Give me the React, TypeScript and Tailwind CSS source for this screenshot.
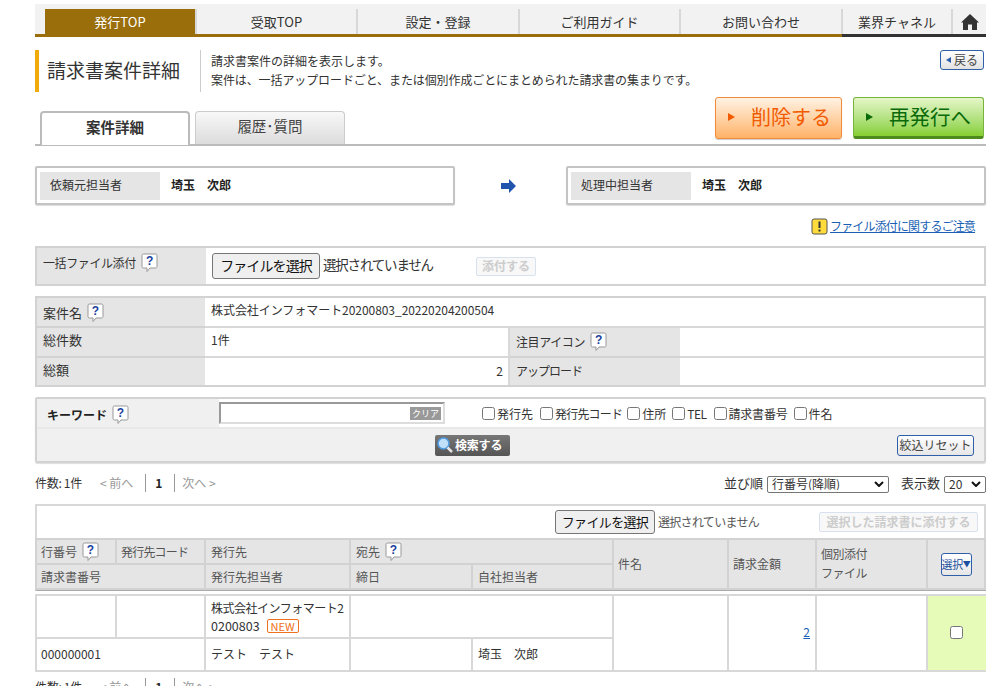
import React from "react";

function Help() {
  return (
    <svg width="17" height="20" viewBox="0 0 17 20" className="inline-block shrink-0">
      <path d="M2.5 1 H14.5 Q16 1 16 2.5 V13.5 Q16 15 14.5 15 H9 L6 18.5 V15 H2.5 Q1 15 1 13.5 V2.5 Q1 1 2.5 1 Z" fill="#fff" stroke="#999" strokeWidth="1" />
      <text x="8.5" y="12" textAnchor="middle" fontSize="12" fontWeight="700" fill="#1a3f9e" fontFamily="Liberation Sans, sans-serif">?</text>
    </svg>
  );
}

function Tri({ color }: { color: string }) {
  return (
    <svg width="7" height="10" viewBox="0 0 7 10" className="shrink-0">
      <path d="M0 1 L7 5 L0 9 Z" fill={color} />
    </svg>
  );
}

function Chevron() {
  return (
    <svg width="10" height="6" viewBox="0 0 10 6" className="absolute right-[5px] top-[5px] pointer-events-none">
      <path d="M1 1 L5 5 L9 1" fill="none" stroke="#111" strokeWidth="2" />
    </svg>
  );
}

function Person({ label, name, w }: { label: string; name: string; w: string }) {
  return (
    <div className={"h-[39px] flex items-center border-2 border-[#c4c4c4] rounded-[2px] p-[3px] bg-white shadow-[0_1px_1px_#ddd] " + w}>
      <div className="w-[120px] h-[28px] bg-[#e5e5e5] flex items-center pl-[10px] pb-[1px] text-[12px] text-[#333]">{label}</div>
      <div className="ml-[11px] pb-[1px] text-[12px] font-bold text-[#222]">{name}</div>
    </div>
  );
}

function NavItem({ children, active, w }: { children: React.ReactNode; active?: boolean; w: string }) {
  return (
    <div className={"h-[25px] flex items-center justify-center border-r-2 border-[#d8d8d8] text-[13px] " + w + " " + (active ? "bg-[#9a6e0a] text-white" : "text-[#333]")}>{children}</div>
  );
}

const thCell = "bg-[#e5e5e5] border-r-2 border-b-2 border-[#d2d2d2] text-[12px] text-[#555] flex items-center";
const tdBase = "bg-white border-r-2 border-b-2 border-[#d8d8d8] text-[12px] text-[#333]";
const tdCell = tdBase + " flex items-center pb-[1px]";

function Pager() {
  return (
    <div className="flex items-center text-[12px]">
      <span className="text-[#333] tracking-[-0.3px]">件数: 1件</span>
      <span className="ml-[18px] text-[#999]">&lt; 前へ</span>
      <span className="ml-[12px] w-px h-[18px] bg-[#999]" />
      <span className="ml-[9px] font-bold text-[#222]">1</span>
      <span className="ml-[12px] w-px h-[18px] bg-[#999]" />
      <span className="ml-[7px] text-[#999]">次へ &gt;</span>
    </div>
  );
}

const checks: { t: string; c: string }[] = [
  { t: "発行先", c: "mr-[7px]" },
  { t: "発行先コード", c: "mr-[5px] tracking-[-0.8px]" },
  { t: "住所", c: "mr-[6px]" },
  { t: "TEL", c: "mr-[7px] tracking-[-0.5px]" },
  { t: "請求書番号", c: "mr-[6px] tracking-[-0.2px]" },
  { t: "件名", c: "" },
];

const cols = "grid-cols-[80px_89px_145px_122px_141px_115px_88px_111px_58px]";

export default function App() {
  return (
    <div className="h-[686px] w-[1000px] overflow-hidden bg-white text-[#333] text-[12px]" style={{ fontFamily: '"Noto Sans CJK JP", "Liberation Sans", sans-serif' }}>
      <div className="ml-[35px] w-[951px] pt-[4px]">
        {/* nav */}
        <div className="h-[33px] bg-[#f2f2f2] pt-[5px] flex flex-col justify-between">
          <div className="flex pl-[10px]">
            <NavItem active w="w-[152px]">発行TOP</NavItem>
            <NavItem w="w-[161px]">受取TOP</NavItem>
            <NavItem w="w-[162px]">設定・登録</NavItem>
            <NavItem w="w-[161px]">ご利用ガイド</NavItem>
            <NavItem w="w-[162px]">お問い合わせ</NavItem>
            <NavItem w="w-[110px]">業界チャネル</NavItem>
            <div className="flex-1 h-[25px] flex items-center justify-center pt-[1px]">
              <svg width="18" height="18" viewBox="0 0 18 18">
                <path d="M9 1 L18 9.5 L16 9.5 V17 H11 V11.5 H7 V17 H2 V9.5 H0 Z" fill="#333" />
              </svg>
            </div>
          </div>
          <div className="flex h-[3px]">
            <div className="w-[807px] bg-[#9a6e0a]" />
            <div className="flex-1 bg-[#333]" />
          </div>
        </div>

        {/* title */}
        <div className="mt-[13px] h-[42px] flex">
          <div className="w-[4px] bg-[#f0ab0a]" />
          <div className="w-[161px] flex items-center pl-[8px] pb-[1px] text-[19px] text-[#333]">請求書案件詳細</div>
          <div className="w-px bg-[#ccc]" />
          <div className="pl-[10px] text-[12px] leading-[19px] text-[#333] pt-[1px]">
            <div>請求書案件の詳細を表示します。</div>
            <div className="tracking-[-0.1px]">案件は、一括アップロードごと、または個別作成ごとにまとめられた請求書の集まりです。</div>
          </div>
          <div className="ml-auto mr-[2px] w-[44px] h-[20px] border border-[#2f5fa8] rounded-[3px] bg-gradient-to-b from-white to-[#e2e2e2] flex items-center justify-center gap-[3px] text-[12px] text-[#444]">
            <svg width="5" height="6" viewBox="0 0 5 6"><path d="M5 0 V6 L0 3 Z" fill="#2f5fa8" /></svg>
            戻る
          </div>
        </div>

        {/* tabs + buttons */}
        <div className="mt-[5px] h-[49px] flex border-b-2 border-[#bbb]">
          <div className="self-end flex ml-[5px] gap-[5px] mb-[-2px]">
            <div className="w-[150px] h-[34px] border-2 border-b-0 border-[#bbb] rounded-t-[4px] bg-white flex items-center justify-center pb-[4px] text-[14.5px] font-bold text-[#333]">案件詳細</div>
            <div className="w-[150px] h-[33px] mb-[2px] border border-b-0 border-[#ccc] rounded-t-[4px] bg-gradient-to-b from-[#f8f8f8] to-[#dcdcdc] flex items-center justify-center pb-[4px] text-[14.5px] text-[#444]">履歴･質問</div>
          </div>
          <div className="ml-auto mr-[2px] flex gap-[11px] h-[42px]">
            <div className="w-[127px] h-[42px] border border-[#f08c3c] rounded-[3px] bg-gradient-to-b from-[#fff2e2] to-[#ffb266] shadow-[0_1px_1px_#ccc] flex items-center pl-[12px] pb-[2px] gap-[16px] text-[20px] text-[#f25a00]">
              <Tri color="#f25a00" />
              削除する
            </div>
            <div className="w-[131px] h-[42px] border border-[#78b43c] border-b-[3px] border-b-[#4f8a1c] rounded-[3px] bg-gradient-to-b from-[#e6f6c8] to-[#86cf2e] flex items-center pl-[12px] pb-[1px] gap-[16px] text-[20.5px] text-[#0a6a0a]">
              <Tri color="#0a6a0a" />
              再発行へ
            </div>
          </div>
        </div>

        {/* persons */}
        <div className="mt-[20px] flex items-center justify-between">
          <Person w="w-[420px]" label="依頼元担当者" name="埼玉　次郎" />
          <svg width="15" height="14" viewBox="0 0 15 14" className="shrink-0 ml-[46px] mr-[50px]">
            <path d="M0 4 H8 V0 L15 7 L8 14 V10 H0 Z" fill="#1f55ad" />
          </svg>
          <Person w="w-[420px]" label="処理中担当者" name="埼玉　次郎" />
        </div>

        {/* notice */}
        <div className="mt-[12px] h-[18px] flex items-center justify-end pr-[11px]">
          <svg width="17" height="17" viewBox="0 0 17 17" className="mr-[2px]">
            <rect x="1" y="1" width="15" height="15" rx="2" fill="#ffdc3c" stroke="#555" />
            <rect x="7.5" y="3.5" width="2" height="6.5" fill="#333" />
            <rect x="7.5" y="11.5" width="2" height="2" fill="#333" />
          </svg>
          <a className="text-[12px] tracking-[-0.85px] text-[#1a5fb4] underline">ファイル添付に関するご注意</a>
        </div>

        {/* bulk attach */}
        <div className="mt-[11px] h-[40px] border-2 border-[#d2d2d2] flex">
          <div className="w-[169px] bg-[#e5e5e5] pl-[6px] pt-[5px] flex items-start gap-[5px] text-[12px] tracking-[-0.4px] text-[#333] leading-[20px]">
            一括ファイル添付 <Help />
          </div>
          <div className="flex-1 flex items-center pl-[6px]">
            <button className="h-[26px] w-[108px] pb-[2px] border border-[#767676] rounded-[3px] bg-[#efefef] text-[14px] tracking-[-0.9px] text-[#111] leading-none">ファイルを選択</button>
            <span className="ml-[3px] pb-[3px] text-[13.5px] tracking-[-1.2px] text-[#333]">選択されていません</span>
            <div className="ml-[43px] h-[19px] w-[60px] border border-[#d8e2ee] rounded-[2px] bg-[#f8f8f8] flex items-center justify-center text-[12px] text-[#ccc] font-bold">添付する</div>
          </div>
        </div>

        {/* info */}
        <div className="mt-[10px] border-2 border-[#d2d2d2] grid grid-cols-[168px_305px_170px_1fr] grid-rows-[30px_30px_27px] h-[91px]">
          <div className="bg-[#e5e5e5] border-b-2 border-[#d2d2d2] pl-[6px] pt-[1px] flex items-center gap-[5px] text-[13px]">案件名 <Help /></div>
          <div className="col-span-3 border-b-2 border-[#d8d8d8] pl-[6px] flex items-center text-[12px] tracking-[-0.05px] text-[#333] pb-[4px]">株式会社インフォマート20200803_20220204200504</div>
          <div className="bg-[#e5e5e5] border-b-2 border-[#d2d2d2] pl-[6px] pb-[4px] flex items-center text-[13px]">総件数</div>
          <div className="border-b-2 border-r-2 border-[#d8d8d8] pl-[6px] flex items-center text-[12px] pb-[4px]">1件</div>
          <div className="bg-[#e5e5e5] border-b-2 border-[#d2d2d2] pl-[6px] flex items-center gap-[5px] text-[12px] tracking-[-0.4px]">注目アイコン <Help /></div>
          <div className="border-b-2 border-[#d8d8d8]" />
          <div className="bg-[#e5e5e5] pl-[6px] pb-[4px] flex items-center text-[13px]">総額</div>
          <div className="border-r-2 border-[#d8d8d8] pr-[5px] flex items-center justify-end text-[12px] pb-[2px]">2</div>
          <div className="bg-[#e5e5e5] pl-[6px] pb-[2px] flex items-center text-[12px] tracking-[-1px]">アップロード</div>
          <div />
        </div>

        {/* keyword */}
        <div className="mt-[10px] h-[66px] border-2 border-[#d2d2d2] rounded-[2px] flex flex-col shadow-[0_1px_1px_#ddd]">
          <div className="h-[30px] flex items-center border-b-2 border-[#e8e8e8]">
            <div className="w-[182px] h-full bg-[#f0f0f0] pl-[10px] pt-[3px] flex items-center gap-[5px] text-[12px] font-bold text-[#222]">キーワード <Help /></div>
            <div className="relative w-[226px] h-[22px] border-2 border-[#999] border-r-[#ddd] border-b-[#ddd] bg-white flex-none">
              <span className="absolute right-[2px] top-[3px] h-[13px] px-[2px] bg-[#999] text-white text-[9px] leading-[13px]">クリア</span>
            </div>
            <div className="ml-[37px] pt-[1px] flex items-center text-[12px] text-[#333]">
              {checks.map(({ t, c }) => (
                <label key={t} className={"flex items-center " + c}>
                  <input type="checkbox" className="m-0 mr-[2px] w-[13px] h-[13px]" />
                  {t}
                </label>
              ))}
            </div>
          </div>
          <div className="flex-1 bg-[#f0f0f0] flex items-center justify-between pl-[398px] pr-[10px]">
            <div className="w-[75px] h-[21px] rounded-[2px] bg-gradient-to-b from-[#777] to-[#555] flex items-center pl-[1px] gap-[1px] text-white text-[12px] font-bold tracking-[-0.2px]">
              <svg width="18" height="18" viewBox="0 0 18 18" className="shrink-0">
                <circle cx="7.5" cy="7.5" r="5.5" fill="#bfe0f8" stroke="#4f9ae0" strokeWidth="1.5" />
                <path d="M11.5 11.5 L16 16" stroke="#e4e4e4" strokeWidth="2.5" />
              </svg>
              検索する
            </div>
            <div className="w-[77px] h-[21px] border border-[#2f5fa8] rounded-[3px] bg-gradient-to-b from-white to-[#e6e6e6] flex items-center justify-center text-[12px] text-[#444]">絞込リセット</div>
          </div>
        </div>

        {/* pager row */}
        <div className="mt-[9px] h-[22px] flex items-center justify-between">
          <Pager />
          <div className="flex items-center text-[13px] text-[#333]">
            <span>並び順</span>
            <div className="relative ml-[4px] w-[122px] h-[17px] mt-[2px]">
              <select className="appearance-none block w-full h-full border border-[#767676] rounded-[2px] pl-[4px] text-[12px] leading-none bg-white"><option>行番号(降順)</option></select>
              <Chevron />
            </div>
            <span className="ml-[12px]">表示数</span>
            <div className="relative ml-[4px] w-[42px] h-[17px] mt-[2px]">
              <select className="appearance-none block w-full h-full border border-[#767676] rounded-[2px] pl-[4px] text-[12px] leading-none bg-white"><option>20</option></select>
              <Chevron />
            </div>
          </div>
        </div>

        {/* list table */}
        <div className="mt-[10px] border-2 border-b-0 border-[#d8d8d8] h-[34px] flex items-center pl-[518px]">
          <button className="h-[24px] w-[100px] pb-[1px] border border-[#767676] rounded-[3px] bg-[#efefef] text-[13px] tracking-[-0.65px] text-[#111] leading-none">ファイルを選択</button>
          <span className="ml-[3px] text-[12px] tracking-[-0.7px] text-[#555]">選択されていません</span>
          <div className="ml-auto mr-[6px] w-[159px] h-[20px] border border-[#d8e2ee] rounded-[2px] bg-[#f8f8f8] flex items-center justify-center text-[12px] font-bold text-[#ccc]">選択した請求書に添付する</div>
        </div>
        <div className={"grid grid-rows-[25px_25px] border-l-2 border-t-2 border-b border-t-[#d2d2d2] border-l-[#d2d2d2] border-b-[#aaa] " + cols}>
          <div className={thCell + " pl-[4px] gap-[5px]"}>行番号 <Help /></div>
          <div className={thCell + " pl-[4px] tracking-[-0.8px]"}>発行先コード</div>
          <div className={thCell + " pl-[5px]"}>発行先</div>
          <div className={thCell + " pl-[5px] col-span-2 gap-[5px]"}>宛先 <Help /></div>
          <div className={thCell + " pl-[4px] row-span-2"}>件名</div>
          <div className={thCell + " pl-[4px] row-span-2"}>請求金額</div>
          <div className={thCell + " pl-[4px] row-span-2 leading-[19px] pb-[3px] tracking-[-0.5px]"}>個別添付<br />ファイル</div>
          <div className={thCell + " row-span-2 justify-center"}>
            <div className="w-[31px] h-[23px] border border-[#2f5fa8] rounded-[3px] bg-gradient-to-b from-white to-[#e6e6e6] flex items-center justify-center text-[11px] tracking-[-0.3px] whitespace-nowrap text-[#1a4fa0]">選択<span className="text-[8px]">▼</span></div>
          </div>
          <div className={thCell + " pl-[4px] col-span-2"}>請求書番号</div>
          <div className={thCell + " pl-[5px]"}>発行先担当者</div>
          <div className={thCell + " pl-[5px]"}>締日</div>
          <div className={thCell + " pl-[5px]"}>自社担当者</div>
        </div>
        <div className={"mt-[3px] grid grid-rows-[43px_33px] border-l-2 border-t-2 border-[#d8d8d8] " + cols}>
          <div className={tdCell} />
          <div className={tdCell} />
          <div className={tdBase + " flex flex-col items-start pl-[5px] pt-[3px] leading-[18px] whitespace-nowrap tracking-[-0.5px]"}>
            <span>株式会社インフォマート2</span>
            <span className="flex items-center text-[12.5px] tracking-normal">0200803<span className="ml-[7px] h-[14px] px-[3px] border border-[#f07020] rounded-[2px] text-[11px] leading-[12px] text-[#f07020]">NEW</span></span>
          </div>
          <div className={tdCell + " col-span-2"} />
          <div className={tdCell + " row-span-2"} />
          <div className={tdCell + " row-span-2 justify-end pr-[5px] pb-[2px]"}><a className="text-[#1a5fb4] underline">2</a></div>
          <div className={tdCell + " row-span-2"} />
          <div className="row-span-2 border-b-2 border-[#d8d8d8] bg-[#e6fbb8] flex items-center justify-center pb-[2px] pr-[1px]">
            <input type="checkbox" className="m-0 w-[13px] h-[13px]" />
          </div>
          <div className={tdCell + " pl-[4px] col-span-2"}>000000001</div>
          <div className={tdCell + " pl-[5px]"}>テスト　テスト</div>
          <div className={tdCell} />
          <div className={tdCell + " pl-[5px]"}>埼玉　次郎</div>
        </div>

        <div className="mt-[6px]"><Pager /></div>
      </div>
    </div>
  );
}
